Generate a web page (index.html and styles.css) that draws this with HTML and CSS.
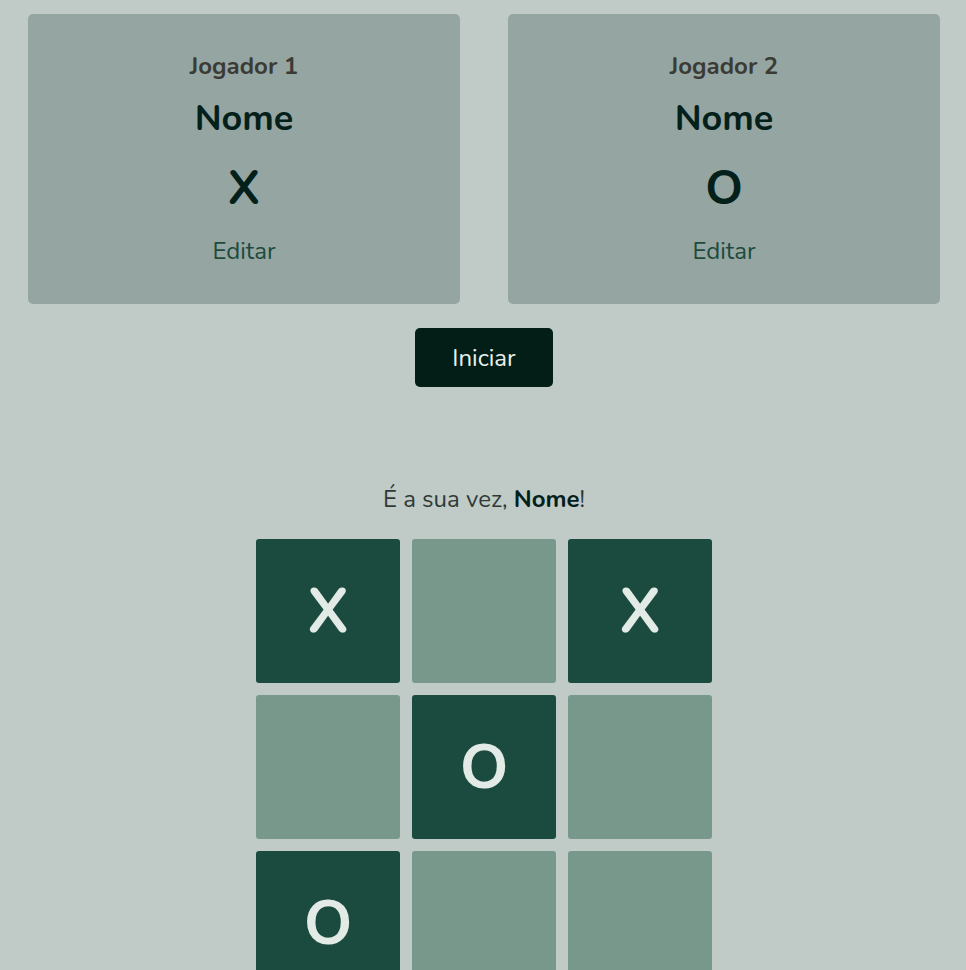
FILE: index.html
```html
<!DOCTYPE html>
<html lang="pt">
<head>
<meta charset="utf-8">
<title>Jogo da Velha</title>
<link rel="stylesheet" href="styles.css">
</head>
<body>
<main class="page">
  <section class="players">
    <div class="player-card">
      <h2 class="player-label">Jogador 1</h2>
      <p class="player-name">Nome</p>
      <p class="player-symbol">X</p>
      <button class="edit-btn">Editar</button>
    </div>
    <div class="player-card">
      <h2 class="player-label">Jogador 2</h2>
      <p class="player-name">Nome</p>
      <p class="player-symbol">O</p>
      <button class="edit-btn">Editar</button>
    </div>
  </section>
  <div class="start-row">
    <button class="start-btn">Iniciar</button>
  </div>
  <p class="turn">É a sua vez, <strong>Nome</strong>!</p>
  <div class="board">
    <div class="cell filled">X</div>
    <div class="cell"></div>
    <div class="cell filled">X</div>
    <div class="cell"></div>
    <div class="cell filled">O</div>
    <div class="cell"></div>
    <div class="cell filled">O</div>
    <div class="cell"></div>
    <div class="cell"></div>
  </div>
</main>
</body>
</html>
```
FILE: styles.css
```css
* { box-sizing: border-box; }
html, body { margin: 0; padding: 0; }
body {
  background: #c0cbc7;
  font-family: "Nunito", "Lato", "Open Sans", sans-serif;
  color: #2f3a36;
}
.page {
  padding: 14px 26px 0 28px;
}
.players {
  display: grid;
  grid-template-columns: 1fr 1fr;
  gap: 48px;
}
.player-card {
  background: #95a5a1;
  border-radius: 5px;
  padding: 37px 0 37px;
  display: flex;
  flex-direction: column;
  align-items: center;
}
.player-label {
  margin: 0;
  font-size: 24px;
  line-height: 30px;
  font-weight: 700;
  color: #3b3b35;
}
.player-name {
  margin: 16px 0 0;
  font-size: 36px;
  line-height: 44px;
  font-weight: 700;
  color: #04201a;
}
.player-symbol {
  margin: 18px 0 0;
  font-size: 48px;
  line-height: 58px;
  font-weight: 700;
  color: #04201a;
}
.edit-btn {
  margin: 18px 0 0;
  padding: 0;
  border: 0;
  background: none;
  font-family: inherit;
  font-size: 24px;
  line-height: 32px;
  color: #1d4a3d;
  cursor: pointer;
}
.start-row {
  display: flex;
  justify-content: center;
  margin-top: 24px;
}
.start-btn {
  height: 59px;
  width: 138px;
  padding: 1px 0 0;
  border: 0;
  border-radius: 5px;
  background: #031e17;
  color: #e9f1ee;
  font-family: inherit;
  font-size: 24px;
  cursor: pointer;
}
.turn {
  margin: 97px 0 0;
  text-align: center;
  font-size: 24px;
  line-height: 30px;
  color: #2f3a36;
}
.turn strong {
  color: #04201a;
  font-weight: 700;
}
.board {
  margin: 25px auto 0;
  width: 456px;
  display: grid;
  grid-template-columns: repeat(3, 144px);
  grid-auto-rows: 144px;
  gap: 12px;
}
.cell {
  background: #78988c;
  border-radius: 3px;
  display: flex;
  align-items: center;
  justify-content: center;
  font-size: 62px;
  font-weight: 700;
  color: #e2ebe6;
}
.cell.filled {
  background: #1b4a3f;
}
```
